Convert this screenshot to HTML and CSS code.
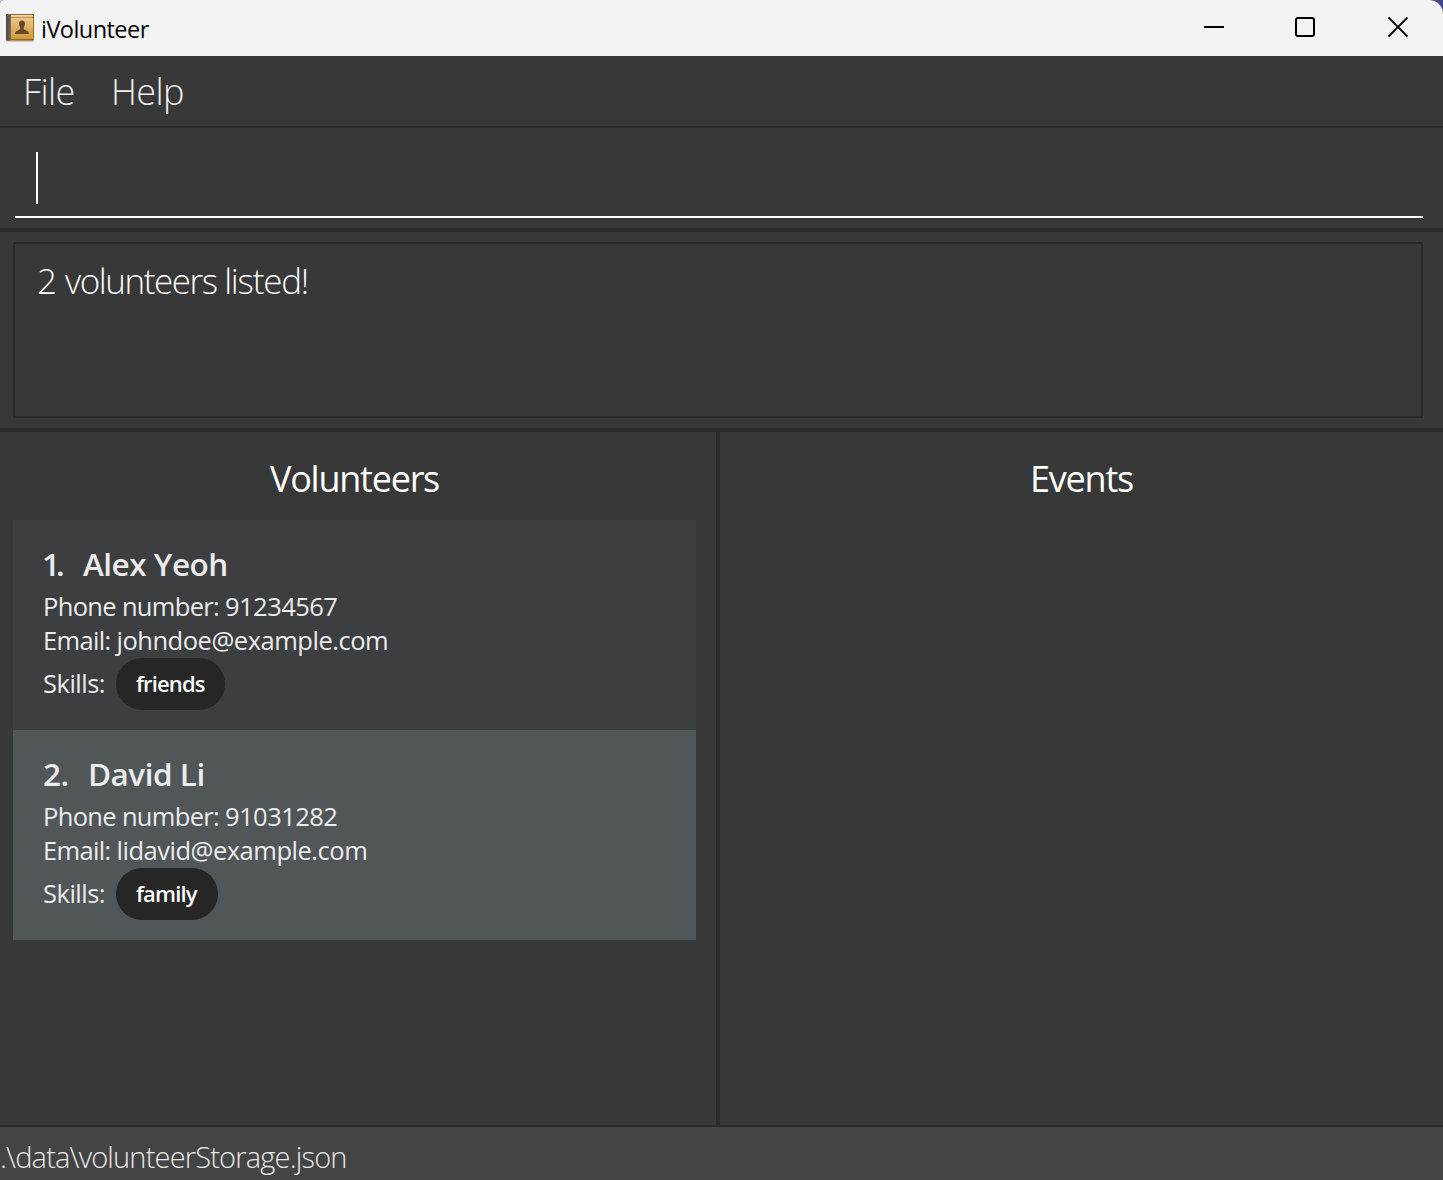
FILE: index.html
```html
<!DOCTYPE html>
<html lang="en">
<head>
<meta charset="utf-8">
<title>iVolunteer</title>
<link rel="stylesheet" href="styles.css">
</head>
<body>
<div class="window">
  <header class="titlebar">
    <svg class="app-icon" width="32" height="32" viewBox="0 0 32 32">
      <defs>
        <linearGradient id="cover" x1="0" y1="0" x2="0" y2="1"><stop offset="0" stop-color="#edc783"/><stop offset="1" stop-color="#d29a3e"/></linearGradient>
        <linearGradient id="spine" x1="0" y1="0" x2="1" y2="0"><stop offset="0" stop-color="#4a4240"/><stop offset="1" stop-color="#786964"/></linearGradient>
      </defs>
      <rect x="2" y="28" width="28" height="2" rx="1" fill="#c9c9c9"/>
      <rect x="2" y="2" width="28" height="26.500" rx="1" fill="#9b661c"/>
      <rect x="7" y="3.200" width="22" height="1.500" fill="#fff0d2"/>
      <rect x="7" y="5.500" width="22" height="21.500" fill="url(#cover)"/>
      <rect x="2" y="2.500" width="5" height="26" rx="1" fill="url(#spine)"/>
      <path d="M18 8.500c2.200 0 3.100 1.500 2.900 3.600-.1 1.700-.9 2.800-1.200 3.600v1.500c1 .8 5.200 1.300 5.300 4.800H11c.1-3.500 4.300-4 5.300-4.800v-1.500c-.3-.8-1.100-1.900-1.200-3.600-.2-2.100.7-3.600 2.900-3.600z" fill="#62492a"/>
    </svg>
    <span class="app-name">iVolunteer</span>
    <div class="controls">
      <svg width="20" height="22" viewBox="0 0 20 22"><path d="M0 11h20" stroke="#000" stroke-width="2"/></svg>
      <svg width="20" height="22" viewBox="0 0 20 22"><rect x="1" y="2" width="18" height="18" rx="2" fill="none" stroke="#000" stroke-width="2"/></svg>
      <svg width="20" height="22" viewBox="0 0 20 22"><path d="M.5 1.500l19 19M19.500 1.500l-19 19" stroke="#000" stroke-width="1.800"/></svg>
    </div>
  </header>
  <nav class="menubar"><span class="menu file">File</span><span class="menu help">Help</span></nav>
  <section class="command"><div class="field"><span class="caret"></span></div></section>
  <section class="result"><div class="result-box"><span class="count">2 </span><span class="subject">volunteers </span><span class="verb">listed!</span></div></section>
  <main class="panels">
    <section class="panel volunteers">
      <h2 class="heading">Volunteers</h2>
      <article class="card">
        <h3 class="name"><span class="num one">1.</span><span>Alex Yeoh</span></h3>
        <p class="line"><span class="key">Phone number: </span><span class="phone">91234567</span></p>
        <p class="line"><span class="key">Email: </span><span class="mail">johndoe@example.com</span></p>
        <div class="skills"><span class="label">Skills:</span><span class="tag friends">friends</span></div>
      </article>
      <article class="card selected">
        <h3 class="name"><span class="num two">2.</span><span>David Li</span></h3>
        <p class="line"><span class="key">Phone number: </span><span class="phone">91031282</span></p>
        <p class="line"><span class="key">Email: </span><span class="mail">lidavid@example.com</span></p>
        <div class="skills"><span class="label">Skills:</span><span class="tag family">family</span></div>
      </article>
    </section>
    <section class="panel events"><h2 class="heading">Events</h2></section>
  </main>
  <footer class="status">.\data\volunteerStorage.json</footer>
</div>
</body>
</html>
```
FILE: styles.css
```css
* { box-sizing: border-box; margin: 0; padding: 0; }
body {
  background: linear-gradient(90deg, #c9bfd0 50%, #434a92 50%) 0 0 / 100% 40px no-repeat #383838;
  font-family: "Open Sans", "Noto Sans", sans-serif;
  white-space: nowrap;
}
.window {
  width: 1443px; height: 1180px; overflow: hidden;
  display: flex; flex-direction: column;
  background: #383838; border-radius: 4px 14px 0 0;
}
.titlebar { height: 56px; flex: none; display: flex; align-items: center; background: #f3f3f3; color: #000; }
.app-icon { margin: 0 5px 0 4px; }
.app-name { padding-top: 2px; font-size: 23.5px; letter-spacing: -0.55px; }
.controls { margin-left: auto; display: flex; padding: 0 35px 2px 0; }
.controls svg:nth-child(2) { margin: 0 73px 0 71px; }
.menubar {
  height: 72px; flex: none; display: flex; padding-left: 23px;
  border-bottom: 2px solid #2a2a2a; line-height: 72px;
  font-size: 36px; font-weight: 300; color: #eee; letter-spacing: -0.6px;
}
.menu { flex: none; }
.file { width: 88px; }
.command { height: 104px; flex: none; padding: 24px 20px 10px 15px; border-bottom: 4px solid #2a2a2a; }
.field { height: 66px; border-bottom: 2px solid #fff; padding-left: 21px; }
.caret { display: block; width: 2px; height: 52px; background: #fff; }
.result { height: 200px; flex: none; padding: 10px 20px 10px 13px; border-bottom: 4px solid #2a2a2a; }
.result-box {
  height: 176px; border: 2px solid #2a2a2a; padding: 13px 0 0 22px;
  line-height: 48px; font-size: 35px; font-weight: 300; color: #fff;
}
.count { letter-spacing: -0.5px; }
.subject { letter-spacing: -1.45px; }
.verb { letter-spacing: -1.2px; }
.panels { height: 693px; flex: none; display: flex; }
.panel { padding-top: 22px; }
.volunteers { width: 720px; padding-left: 13px; padding-right: 20px; border-right: 4px solid #2a2a2a; }
.events { flex: 1; }
.heading {
  line-height: 50px; margin-bottom: 16px; text-align: center;
  font-size: 36px; font-weight: 400; letter-spacing: -1.25px; color: #fff;
}
.card { height: 210px; padding: 23px 30px 0; background: #3c3e3f; color: #ececec; }
.card.selected { background: #515658; }
.name { display: flex; line-height: 42px; margin-bottom: 4px; font-size: 31.5px; font-weight: 600; letter-spacing: -0.5px; }
.num.one { width: 40px; letter-spacing: -4px; text-indent: -1px; }
.num.two { width: 45px; }
.line { line-height: 34px; font-size: 25.5px; white-space: pre; }
.key { letter-spacing: -0.67px; }
.phone { letter-spacing: -0.56px; }
.mail { letter-spacing: -0.48px; }
.skills { display: flex; align-items: center; height: 52px; margin-top: 1px; font-size: 25.5px; }
.label { width: 73px; line-height: 50px; padding-bottom: 2px; letter-spacing: -0.5px; }
.tag {
  height: 52px; line-height: 51px; padding-left: 20px; border-radius: 26px;
  background: #262626; font-size: 22px; font-weight: 600; letter-spacing: -0.85px; color: #fff;
}
.friends { width: 109px; }
.family { width: 102px; }
.status {
  flex: 1; border-top: 2px solid #2a2a2a; background: #444;
  line-height: 59px; font-size: 29px; font-weight: 300; letter-spacing: -0.82px; color: #e8e8e8;
}
```
